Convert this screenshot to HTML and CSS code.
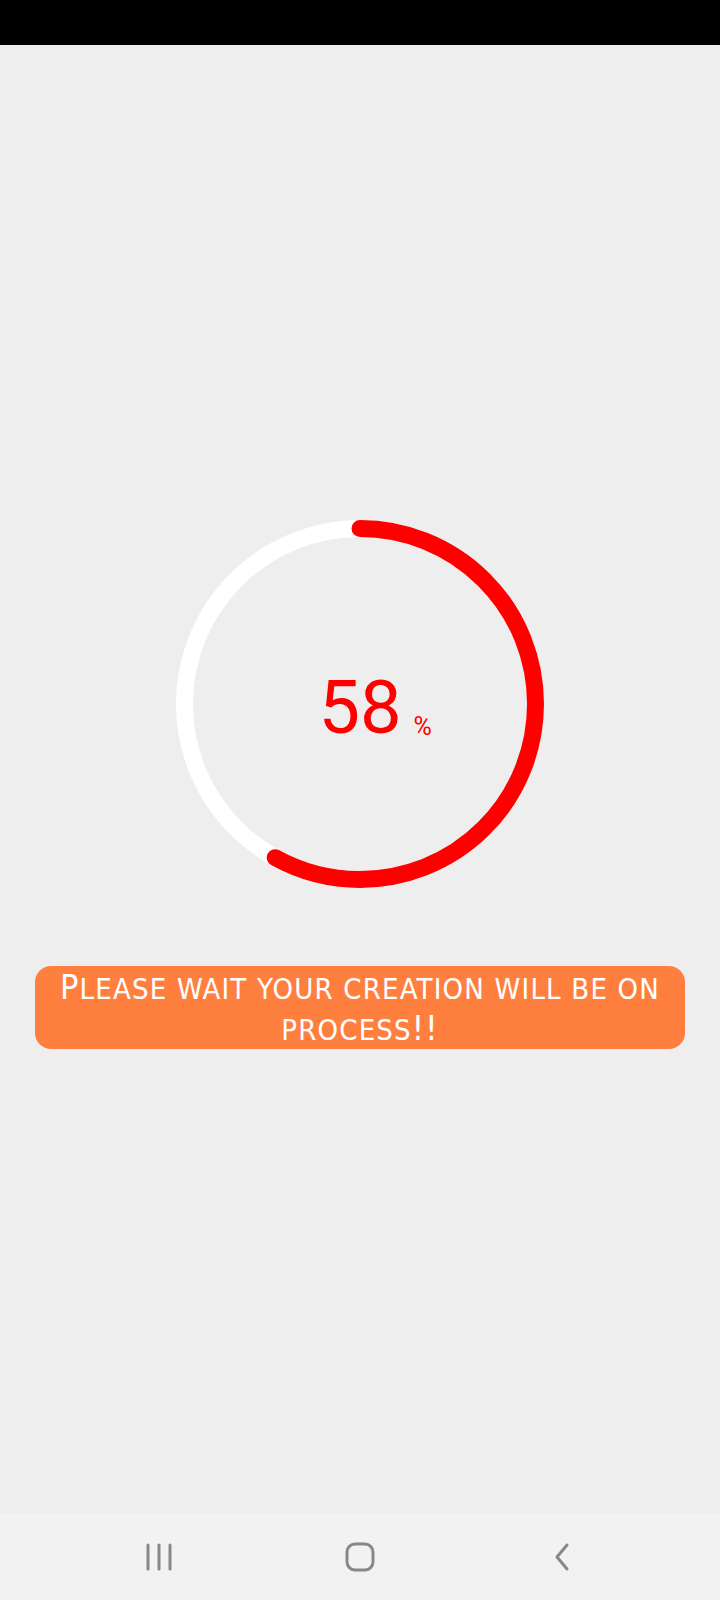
FILE: index.html
```html
<!DOCTYPE html>
<html>
<head>
<meta charset="utf-8">
<link rel="stylesheet" href="styles.css">
</head>
<body>
<div class="status"></div>
<main class="main">
  <div class="progress">
    <svg class="ring" width="368" height="368" viewBox="0 0 368 368">
      <circle cx="184" cy="184" r="175.5" fill="none" stroke="#ffffff" stroke-width="17"/>
      <circle cx="184" cy="184" r="175.5" fill="none" stroke="#ff0000" stroke-width="17" stroke-linecap="round" stroke-dasharray="639.6 2000" transform="rotate(-90 184 184)"/>
    </svg>
    <div class="value"><span class="num">58<span class="pct">%</span></span></div>
  </div>
  <div class="banner"><span class="cap">P</span>lease wait your creation will be on process<span class="cap">!!</span></div>
</main>
<nav class="navbar">
  <svg class="nav-icon" width="30" height="30" viewBox="0 0 30 30"><path d="M4 3v24M15 3v24M26 3v24" stroke="#888" stroke-width="3" stroke-linecap="round" fill="none"/></svg>
  <svg class="nav-icon" width="30" height="30" viewBox="0 0 30 30"><rect x="2" y="2" width="26" height="26" rx="8" stroke="#888" stroke-width="3" fill="none"/></svg>
  <svg class="nav-icon" width="30" height="30" viewBox="0 0 30 30"><path d="M21 3L11 15L21 27" stroke="#888" stroke-width="3" stroke-linecap="round" stroke-linejoin="round" fill="none"/></svg>
</nav>
</body>
</html>
```
FILE: styles.css
```css
html, body {
  margin: 0;
  padding: 0;
}
body {
  width: 720px;
  height: 1600px;
  background: #eeeeee;
  display: flex;
  flex-direction: column;
  font-family: Roboto, "Liberation Sans", sans-serif;
}
.status {
  height: 45px;
  background: #000;
  flex: none;
}
.main {
  flex: 1;
  display: flex;
  flex-direction: column;
  align-items: center;
}
.progress {
  margin-top: 475px;
  width: 368px;
  height: 368px;
  position: relative;
}
.ring {
  display: block;
}
.value {
  position: absolute;
  inset: 0;
  display: flex;
  align-items: center;
  justify-content: center;
}
.num {
  position: relative;
  color: #ff0000;
  font-size: 74px;
  line-height: 1;
  margin-left: 0;
  margin-top: 8px;
}
.pct {
  position: absolute;
  left: 100%;
  bottom: 6px;
  margin-left: 12px;
  font-size: 25px;
  line-height: 1;
}
.banner {
  margin-top: 78px;
  width: 650px;
  height: 83px;
  box-sizing: border-box;
  background: #ff7f3f;
  border-radius: 16px;
  color: #ffffff;
  text-align: center;
  font-family: "Liberation Sans Narrow", "DejaVu Sans Condensed", "Liberation Sans", sans-serif;
  font-stretch: condensed;
  font-size: 29px;
  line-height: 41px;
  text-transform: uppercase;
  letter-spacing: 1.2px;
  padding: 3px 8px 0;
}
.cap {
  font-size: 34px;
  line-height: 30px;
}
.navbar {
  height: 86px;
  flex: none;
  background: #f2f2f2;
  display: flex;
  align-items: center;
  justify-content: center;
  gap: 171px;
}
.nav-icon {
  display: block;
}
```
